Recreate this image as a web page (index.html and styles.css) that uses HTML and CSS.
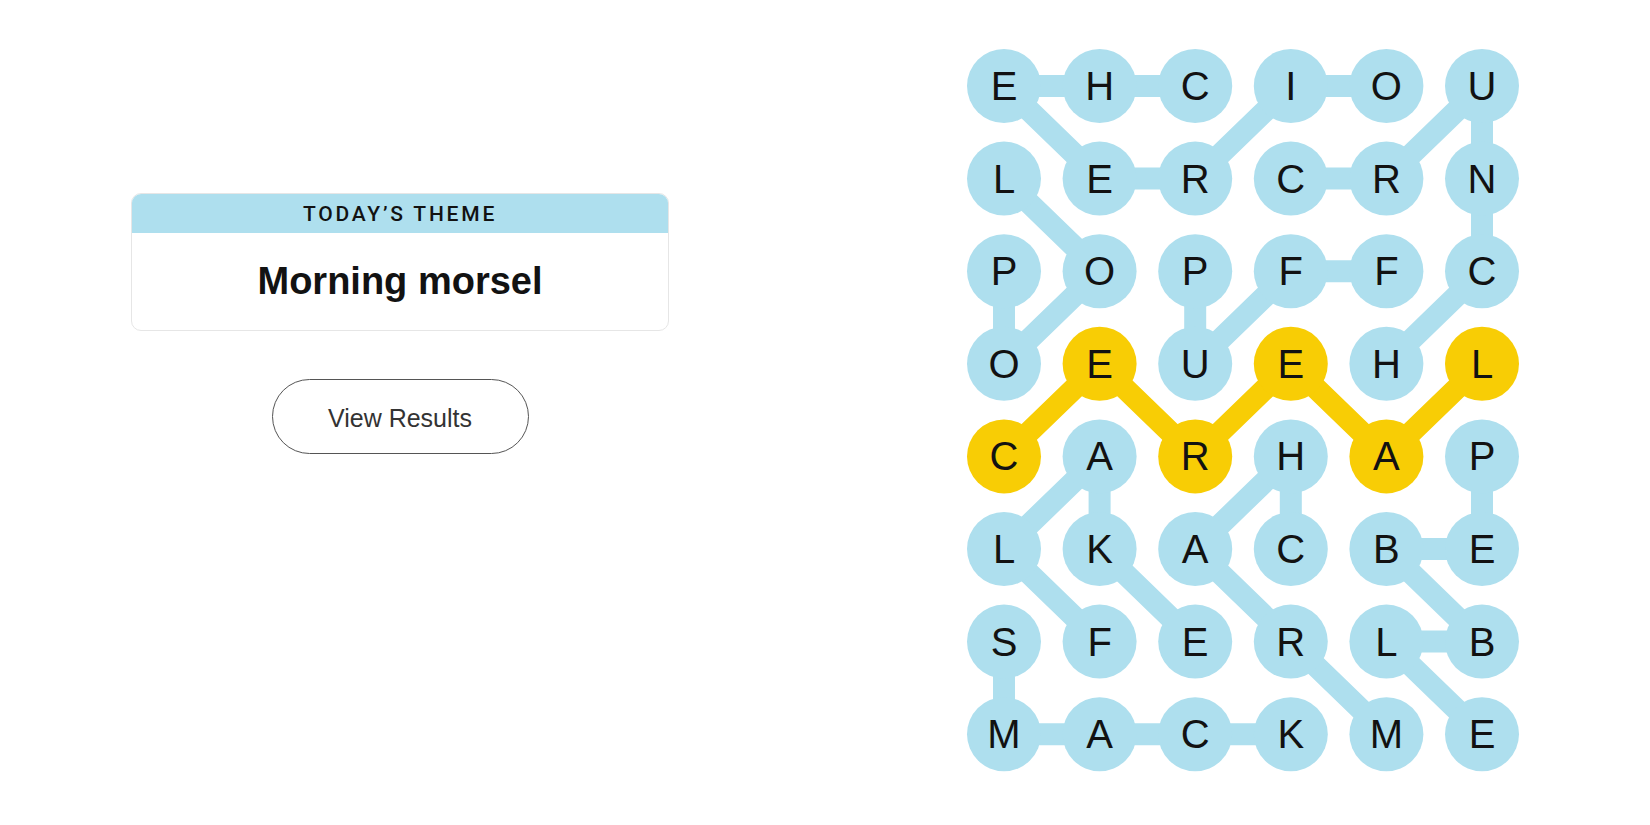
FILE: index.html
```html
<!DOCTYPE html>
<html lang="en">
<head>
<meta charset="utf-8">
<title>Strands</title>
<link rel="stylesheet" href="styles.css">
</head>
<body>
<main class="page">
  <section class="left">
    <div class="card">
      <div class="card-head">TODAY’S THEME</div>
      <div class="card-body">Morning morsel</div>
    </div>
    <button class="results">View Results</button>
  </section>
  <section class="right">
    <svg class="board" width="570" height="745" viewBox="0 0 570 745">
      <g class="paths">
        <polyline points="235.2,46 139.6,46 44,46 139.6,138.6 235.2,138.6 330.8,46 426.4,46"/>
        <polyline points="330.8,138.6 426.4,138.6 522,46 522,138.6 522,231.2 426.4,323.8"/>
        <polyline points="44,138.6 139.6,231.2 44,323.8 44,231.2"/>
        <polyline points="235.2,231.2 235.2,323.8 330.8,231.2 426.4,231.2"/>
        <polyline points="139.6,601.6 44,509 139.6,416.4 139.6,509 235.2,601.6"/>
        <polyline points="330.8,509 330.8,416.4 235.2,509 330.8,601.6 426.4,694.2"/>
        <polyline points="522,416.4 522,509 426.4,509 522,601.6 426.4,601.6 522,694.2"/>
        <polyline points="44,601.6 44,694.2 139.6,694.2 235.2,694.2 330.8,694.2"/>
        <polyline class="span" points="44,416.4 139.6,323.8 235.2,416.4 330.8,323.8 426.4,416.4 522,323.8"/>
      </g>
      <g class="nodes">
        <circle cx="44" cy="46" r="37"/><circle cx="139.6" cy="46" r="37"/><circle cx="235.2" cy="46" r="37"/><circle cx="330.8" cy="46" r="37"/><circle cx="426.4" cy="46" r="37"/><circle cx="522" cy="46" r="37"/>
        <circle cx="44" cy="138.6" r="37"/><circle cx="139.6" cy="138.6" r="37"/><circle cx="235.2" cy="138.6" r="37"/><circle cx="330.8" cy="138.6" r="37"/><circle cx="426.4" cy="138.6" r="37"/><circle cx="522" cy="138.6" r="37"/>
        <circle cx="44" cy="231.2" r="37"/><circle cx="139.6" cy="231.2" r="37"/><circle cx="235.2" cy="231.2" r="37"/><circle cx="330.8" cy="231.2" r="37"/><circle cx="426.4" cy="231.2" r="37"/><circle cx="522" cy="231.2" r="37"/>
        <circle cx="44" cy="323.8" r="37"/><circle class="span" cx="139.6" cy="323.8" r="37"/><circle cx="235.2" cy="323.8" r="37"/><circle class="span" cx="330.8" cy="323.8" r="37"/><circle cx="426.4" cy="323.8" r="37"/><circle class="span" cx="522" cy="323.8" r="37"/>
        <circle class="span" cx="44" cy="416.4" r="37"/><circle cx="139.6" cy="416.4" r="37"/><circle class="span" cx="235.2" cy="416.4" r="37"/><circle cx="330.8" cy="416.4" r="37"/><circle class="span" cx="426.4" cy="416.4" r="37"/><circle cx="522" cy="416.4" r="37"/>
        <circle cx="44" cy="509" r="37"/><circle cx="139.6" cy="509" r="37"/><circle cx="235.2" cy="509" r="37"/><circle cx="330.8" cy="509" r="37"/><circle cx="426.4" cy="509" r="37"/><circle cx="522" cy="509" r="37"/>
        <circle cx="44" cy="601.6" r="37"/><circle cx="139.6" cy="601.6" r="37"/><circle cx="235.2" cy="601.6" r="37"/><circle cx="330.8" cy="601.6" r="37"/><circle cx="426.4" cy="601.6" r="37"/><circle cx="522" cy="601.6" r="37"/>
        <circle cx="44" cy="694.2" r="37"/><circle cx="139.6" cy="694.2" r="37"/><circle cx="235.2" cy="694.2" r="37"/><circle cx="330.8" cy="694.2" r="37"/><circle cx="426.4" cy="694.2" r="37"/><circle cx="522" cy="694.2" r="37"/>
      </g>
      <g class="letters">
        <text x="44" y="60">E</text><text x="139.6" y="60">H</text><text x="235.2" y="60">C</text><text x="330.8" y="60">I</text><text x="426.4" y="60">O</text><text x="522" y="60">U</text>
        <text x="44" y="152.6">L</text><text x="139.6" y="152.6">E</text><text x="235.2" y="152.6">R</text><text x="330.8" y="152.6">C</text><text x="426.4" y="152.6">R</text><text x="522" y="152.6">N</text>
        <text x="44" y="245.2">P</text><text x="139.6" y="245.2">O</text><text x="235.2" y="245.2">P</text><text x="330.8" y="245.2">F</text><text x="426.4" y="245.2">F</text><text x="522" y="245.2">C</text>
        <text x="44" y="337.8">O</text><text x="139.6" y="337.8">E</text><text x="235.2" y="337.8">U</text><text x="330.8" y="337.8">E</text><text x="426.4" y="337.8">H</text><text x="522" y="337.8">L</text>
        <text x="44" y="430.4">C</text><text x="139.6" y="430.4">A</text><text x="235.2" y="430.4">R</text><text x="330.8" y="430.4">H</text><text x="426.4" y="430.4">A</text><text x="522" y="430.4">P</text>
        <text x="44" y="523">L</text><text x="139.6" y="523">K</text><text x="235.2" y="523">A</text><text x="330.8" y="523">C</text><text x="426.4" y="523">B</text><text x="522" y="523">E</text>
        <text x="44" y="615.6">S</text><text x="139.6" y="615.6">F</text><text x="235.2" y="615.6">E</text><text x="330.8" y="615.6">R</text><text x="426.4" y="615.6">L</text><text x="522" y="615.6">B</text>
        <text x="44" y="708.2">M</text><text x="139.6" y="708.2">A</text><text x="235.2" y="708.2">C</text><text x="330.8" y="708.2">K</text><text x="426.4" y="708.2">M</text><text x="522" y="708.2">E</text>
      </g>
    </svg>
  </section>
</main>
</body>
</html>
```

FILE: styles.css
```css
html, body {
  margin: 0;
  padding: 0;
  background: #ffffff;
}

body {
  font-family: "Liberation Sans", Arial, sans-serif;
  color: #121212;
}

.page {
  display: flex;
  width: 1650px;
  height: 825px;
}

.left {
  width: 800px;
  display: flex;
  flex-direction: column;
  align-items: center;
  padding-top: 193px;
}

.card {
  width: 538px;
  box-sizing: border-box;
  border: 1px solid #e6e6e6;
  border-radius: 10px;
  overflow: hidden;
}

.card-head {
  height: 40px;
  background: #aedfee;
  display: flex;
  align-items: center;
  justify-content: center;
  font-family: Roboto, "Liberation Sans", Arial, sans-serif;
  font-size: 21px;
  font-weight: 500;
  letter-spacing: 2.8px;
  color: #121212;
  margin: -1px -1px 0;
  padding-top: 1px;
  box-sizing: border-box;
}

.card-body {
  height: 97px;
  display: flex;
  align-items: center;
  justify-content: center;
  font-size: 38px;
  font-weight: 700;
  color: #121212;
}

.results {
  margin-top: 48px;
  width: 257px;
  height: 75px;
  border: 1px solid #555555;
  border-radius: 38px;
  background: #ffffff;
  font-family: "Liberation Sans", Arial, sans-serif;
  font-size: 25px;
  color: #333333;
  padding: 3px 0 0;
}

.right {
  padding-left: 160px;
  padding-top: 40px;
}

.board {
  display: block;
}

.paths polyline {
  fill: none;
  stroke: #aedfee;
  stroke-width: 22;
  stroke-linejoin: round;
  stroke-linecap: round;
}

.paths polyline.span {
  stroke: #f8cd05;
}

.nodes circle {
  fill: #aedfee;
}

.nodes circle.span {
  fill: #f8cd05;
}

.letters text {
  font-family: "Liberation Sans", Arial, sans-serif;
  font-size: 40px;
  fill: #121212;
  text-anchor: middle;
}
```
